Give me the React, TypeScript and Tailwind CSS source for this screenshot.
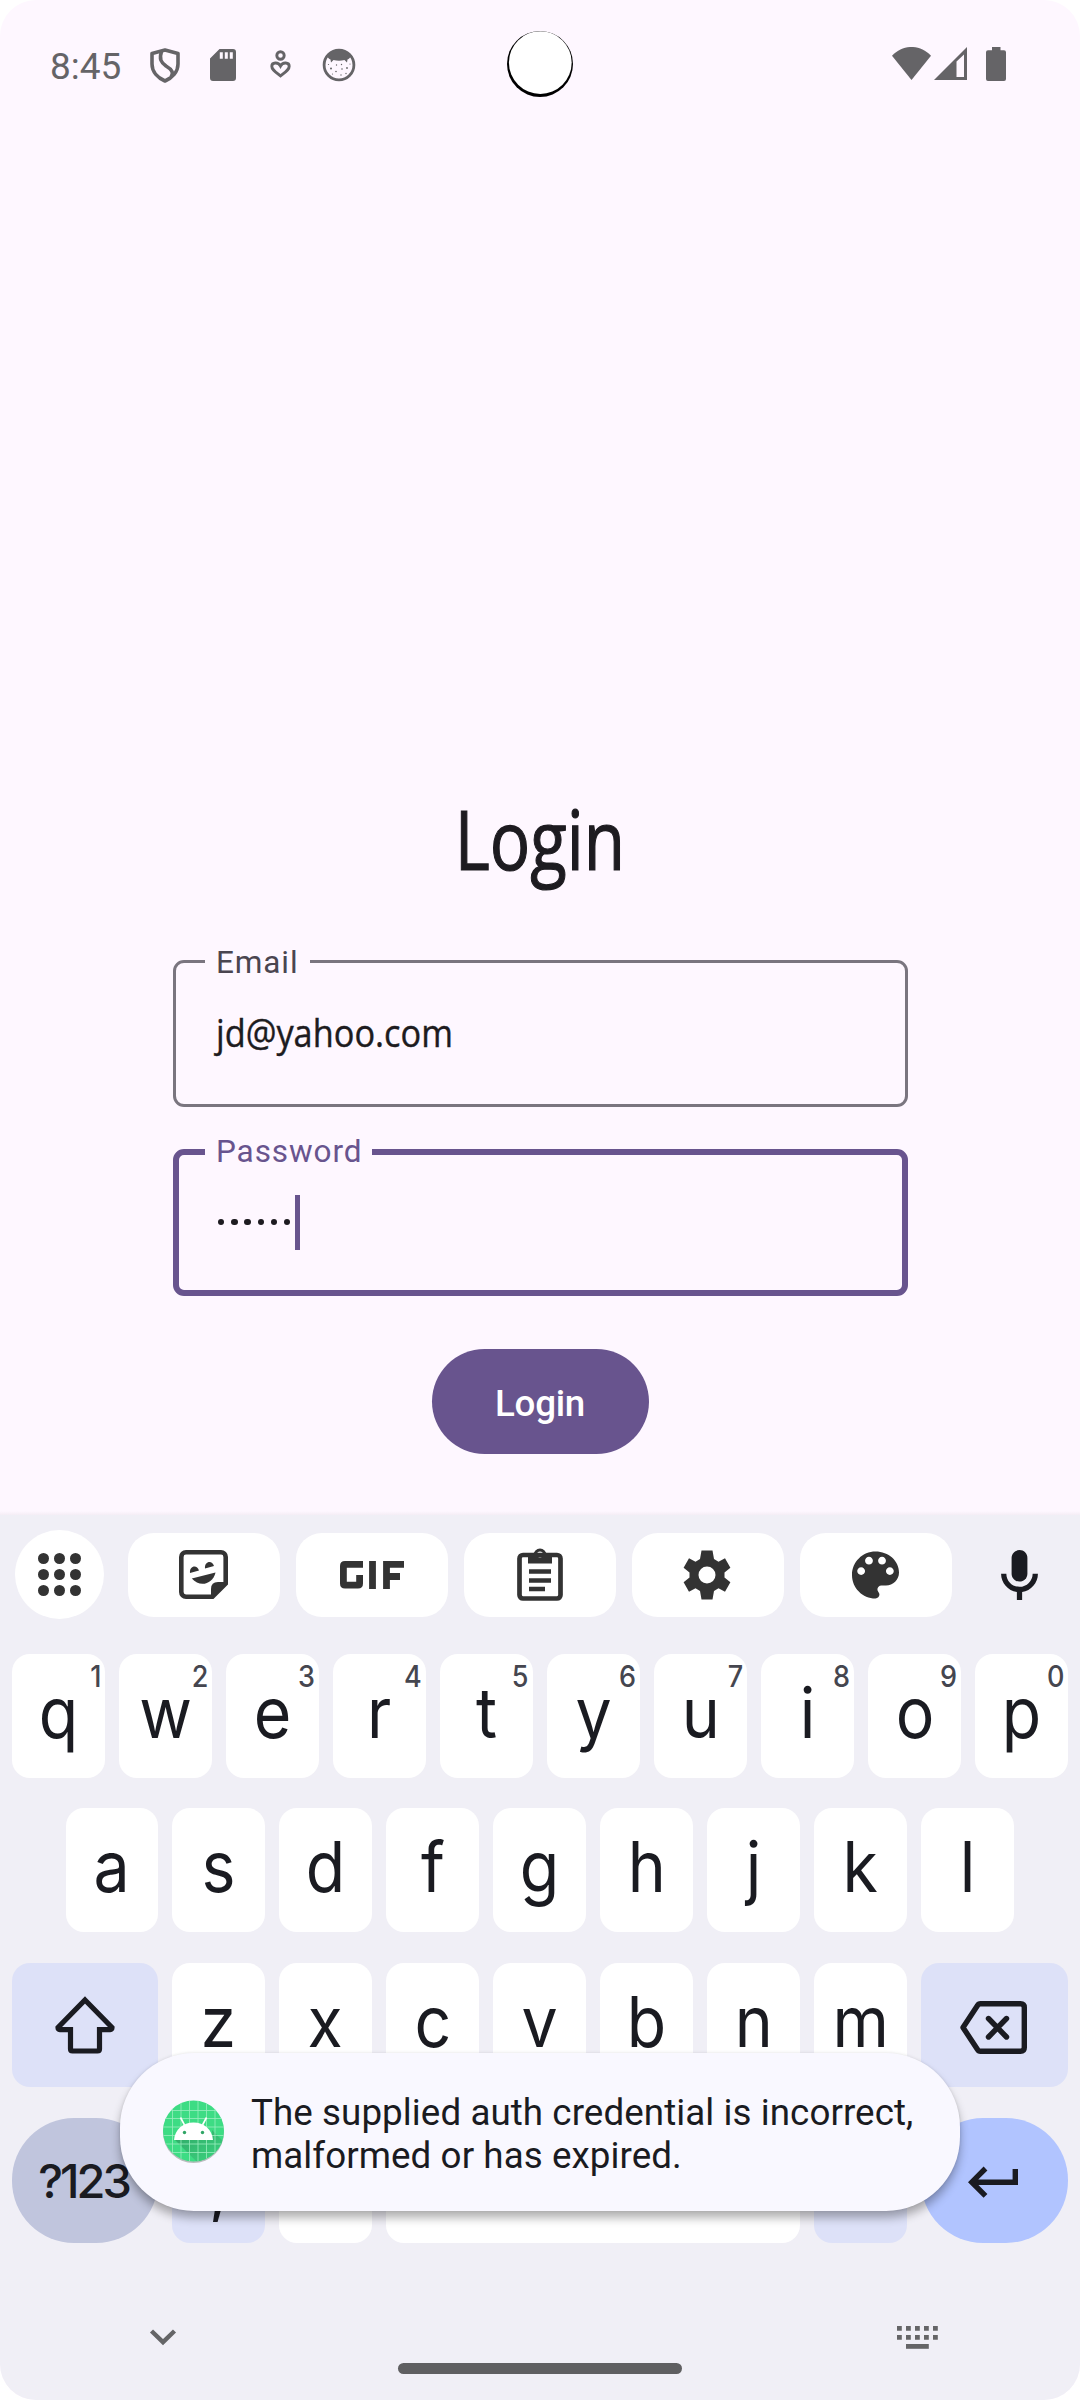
import type { ReactNode } from "react";

const GREY = "#656467";

function StatusBar() {
  return (
    <header className="relative flex h-[124px] shrink-0 items-start pt-[45px] text-[#656467]">
      <span className="ml-[50px] w-[99px] pt-px font-['Roboto'] text-[37px] leading-[42px]">8:45</span>
      <svg className="mt-[3px] mr-[29px]" width="32" height="35" viewBox="0 0 32 35" fill="none" stroke={GREY} strokeWidth="3.600" strokeLinejoin="round">
        <path d="M16 2 L29 5.500 V16 C29 24 23 30 16 33 C9 30 3 24 3 16 V5.500 Z" />
        <path d="M12.500 3.500 C10 11 12 14.500 17 18 C23 21.500 25 25 22 29" />
      </svg>
      <svg className="mt-1 mr-[34px]" width="26" height="32" viewBox="0 0 26 32">
        <path fill={GREY} fillRule="evenodd" d="M9.500 0H23a3 3 0 0 1 3 3v26a3 3 0 0 1-3 3H3a3 3 0 0 1-3-3V9.500Z M9.800 3.200v6.600h3V3.200Z M14.800 3.200v6.600h3V3.200Z M19.800 3.200v6.600h3V3.200Z" />
      </svg>
      <svg className="mt-[5px] mr-[31px]" width="21" height="29" viewBox="0 0 21 29" fill="none" stroke={GREY} strokeWidth="2.900">
        <circle cx="10.500" cy="5.500" r="3.700" />
        <path d="M10.500 26 C5 21.500 1.800 19.500 1.800 16.200 C1.800 12.500 8 11.500 10.500 16 C13 11.500 19.200 12.500 19.200 16.200 C19.200 19.500 16 21.500 10.500 26 Z" />
      </svg>
      <svg className="mt-[3px]" width="34" height="34" viewBox="0 0 34 34">
        <circle cx="17" cy="17" r="14.900" fill="none" stroke={GREY} strokeWidth="2.800" />
        <path d="M5 8 C11 0 23 0 29 8 C28 10 27 11 25.500 11.500 L25 14.500 L22.500 12 C19 13 15 13 11.500 12 L9 14.500 L8.500 11.500 C7 11 6 10 5 8 Z" fill={GREY} />
        <g fill={GREY}>
          <circle cx="9" cy="20.500" r="1" />
          <circle cx="14.500" cy="17" r="0.700" />
          <circle cx="19.500" cy="16.500" r="0.700" />
          <circle cx="25" cy="20" r="0.900" />
          <circle cx="20" cy="21" r="0.800" />
          <circle cx="14" cy="23.500" r="0.800" />
          <circle cx="19" cy="27" r="0.700" />
          <circle cx="10.500" cy="26" r="0.600" />
          <circle cx="24" cy="25.500" r="0.700" />
          <circle cx="28" cy="16" r="0.600" />
          <circle cx="6.500" cy="16.500" r="0.600" />
        </g>
      </svg>
      <svg className="absolute left-[506px] top-[30px]" width="68" height="68" viewBox="0 0 68 68">
        <circle cx="34" cy="34" r="33" fill="#000" />
        <circle cx="34.300" cy="32.600" r="31.400" fill="#fff" />
      </svg>
      <div className="mt-0.5 ml-auto mr-[74px] flex">
        <svg width="39" height="33" viewBox="0 0 39 33" fill={GREY}><path d="M0 8.800 C11-3 28-3 39 8.800 L19.500 33Z" /></svg>
        <svg className="ml-[3px]" width="33" height="33" viewBox="0 0 33 33">
          <path fill={GREY} fillRule="evenodd" d="M33 0V33H0Z M22.500 14.500V30H30V7.500Z" />
        </svg>
        <svg className="ml-[19px]" width="20" height="34" viewBox="0 0 20 34" fill={GREY}>
          <path d="M6 0h8.500v3.300H18a2 2 0 0 1 2 2V32a2 2 0 0 1-2 2H2a2 2 0 0 1-2-2V5.300a2 2 0 0 1 2-2h4Z" />
        </svg>
      </div>
    </header>
  );
}

function Form() {
  return (
    <main className="flex flex-1 flex-col items-center pt-[664px] text-[#1d1b20]">
      <h1 className="h-[100px] scale-x-[0.82] font-['Open_Sans'] text-[82px] leading-[100px] [-webkit-text-stroke:1.2px_#1d1b20]">Login</h1>
      <div className="relative mt-[72px] ml-px h-[147px] w-[735px] shrink-0 rounded-[11px] border-[3px] border-[#7a757f]">
        <span className="absolute -top-[21px] left-[29px] h-[42px] w-[105px] bg-[#fef7ff] pl-[11px] font-['Roboto'] text-[31.5px] leading-[42px] tracking-[0.9px] text-[#4a4550]">Email</span>
        <p className="mt-[41px] ml-[40px] w-max origin-left scale-x-[0.88] font-['Open_Sans'] text-[39px] leading-[56px] [-webkit-text-stroke:0.4px_#1d1b20]">jd@yahoo.com</p>
      </div>
      <div className="relative mt-[42px] ml-px h-[147px] w-[735px] shrink-0 rounded-[11px] border-[6px] border-[#68548e]">
        <span className="absolute -top-[24px] left-[26px] h-[42px] w-[167px] bg-[#fef7ff] pl-[11px] font-['Roboto'] text-[31.5px] leading-[42px] tracking-[0.9px] text-[#68548e]">Password</span>
        <div className="mt-[40px] ml-[39px] flex h-[55px] items-center">
          <div className="-mt-px flex gap-[6.800px]">
            {[0, 1, 2, 3, 4, 5].map((n) => (
              <span key={n} className="size-[6.400px] rounded-full bg-[#1d1b20]" />
            ))}
          </div>
          <span className="ml-[4.500px] h-[55px] w-[5px] bg-[#68548e]" />
        </div>
      </div>
      <button className="mt-[53px] h-[105px] w-[217px] shrink-0 rounded-full bg-[#68548e] pt-[4px] font-['Roboto'] text-[36.750px] font-medium leading-[44px] tracking-[-0.3px] text-white">Login</button>
    </main>
  );
}

function Pill({ children }: { children: ReactNode }) {
  return <div className="flex h-[84px] w-[152px] items-center justify-center rounded-[26px] bg-white">{children}</div>;
}

function Toolbar() {
  const ink = "#333333";
  return (
    <div className="flex h-[89px] items-center pl-[15px] pr-[42px]">
      <div className="mr-[24px] flex size-[89px] items-center justify-center rounded-full bg-white">
        <div className="grid grid-cols-3 gap-[5.200px]">
          {[0, 1, 2, 3, 4, 5, 6, 7, 8].map((n) => (
            <span key={n} className="size-[10.700px] rounded-full bg-[#333333]" />
          ))}
        </div>
      </div>
      <div className="flex gap-4">
        <Pill>
          <svg className="mr-[2px]" width="49" height="49" viewBox="0 0 49 49" fill={ink}>
            <path d="M7 2.300H42a4.700 4.700 0 0 1 4.700 4.700V33.500L33.500 46.700H7A4.700 4.700 0 0 1 2.300 42V7A4.700 4.700 0 0 1 7 2.300Z" fill="none" stroke={ink} strokeWidth="4.600" />
            <path d="M32 48V39q0-7 7-7H48L33 48Z" />
            <path d="M11 23c-.8-7 7-9 9-2.500Z M26 18.500c-.8-7 7-9 9-2.500Z" />
            <path d="M12.800 28.600 36.500 22.500C34 34 21 38 12.800 28.600Z" />
          </svg>
        </Pill>
        <Pill>
          <svg className="mr-px" width="64" height="28" viewBox="0 0 64 28" fill="none" stroke={ink} strokeWidth="6.800" strokeLinejoin="round">
            <path d="M23 3.400H5Q3.400 3.400 3.400 5V22.500Q3.400 24.100 5 24.100H18Q19.600 24.100 19.600 22.500V14" />
            <path d="M32.500 0V28M46.500 28V3.400H64M46.500 15.500H60" strokeLinejoin="miter" />
          </svg>
        </Pill>
        <Pill>
          <svg className="-mt-px mr-px" width="46" height="54" viewBox="0 0 46 54" fill="none" stroke={ink} strokeWidth="4.700">
            <rect x="2.500" y="8" width="41" height="43.500" rx="3.500" />
            <path d="M12 24.500H34M12 33.500H34M12 42H28" />
            <path d="M11 8V16.500H35V8H29.500A6.500 6.500 0 0 0 16.500 8Z M23 4.500a3 3 0 1 1 0 6a3 3 0 1 1 0-6Z" fill={ink} fillRule="evenodd" stroke="none" />
          </svg>
        </Pill>
        <Pill>
          <svg className="mr-[2px]" width="48" height="50" viewBox="-24 -25 48 50" fill={ink}>
            <path fillRule="evenodd" d="M-5.500-24.500H5.500L7-16 11.500-13.300 18-16.700 23.400-7.300 17.500-2.500V2.500L23.400 7.300 18 16.700 11.500 13.300 7 16 5.500 24.500H-5.500L-7 16-11.500 13.300-18 16.700-23.400 7.300-17.500 2.500V-2.500L-23.400-7.300-18-16.700-11.500-13.300-7-16Z M0-8.500A8.500 8.500 0 1 0 0 8.500A8.500 8.500 0 1 0 0-8.500Z" />
          </svg>
        </Pill>
        <Pill>
          <svg className="mr-px" width="47" height="48" viewBox="3 3 18 18" fill={ink}>
            <path d="M12 3c-4.970 0-9 4.030-9 9s4.030 9 9 9c.83 0 1.500-.67 1.500-1.500 0-.39-.15-.74-.39-1.010-.23-.26-.38-.61-.38-.99 0-.83.67-1.500 1.500-1.500H16c2.760 0 5-2.240 5-5 0-4.420-4.030-8-9-8zm-5.500 9c-.83 0-1.500-.67-1.500-1.500S5.670 9 6.500 9 8 9.670 8 10.500 7.330 12 6.500 12zm3-4C8.670 8 8 7.330 8 6.500S8.670 5 9.500 5s1.500.67 1.500 1.500S10.330 8 9.500 8zm5 0c-.83 0-1.500-.67-1.500-1.500S13.670 5 14.500 5s1.500.67 1.500 1.500S15.330 8 14.500 8zm3 4c-.83 0-1.500-.67-1.500-1.500S16.670 9 17.500 9s1.500.67 1.500 1.500-.67 1.500-1.500 1.500z" />
          </svg>
        </Pill>
      </div>
      <svg className="ml-auto" width="37" height="50" viewBox="5 2 14 19" fill="#1a1b21">
        <path d="M12 14c1.660 0 3-1.340 3-3V5c0-1.660-1.340-3-3-3S9 3.340 9 5v6c0 1.660 1.340 3 3 3z" />
        <path d="M17 11c0 2.760-2.240 5-5 5s-5-2.240-5-5H5c0 3.530 2.610 6.430 6 6.920V21h2v-3.080c3.390-.49 6-3.390 6-6.920h-2z" />
      </svg>
    </div>
  );
}

function Key({ label, hint, first }: { label: string; hint?: string; first?: boolean }) {
  return (
    <div className={`relative flex h-[123.500px] justify-center rounded-[18px] bg-white pt-[19px] font-['Inter'] text-[70px] leading-[80px] ${first ? "w-[92px]" : "w-[93px]"}`}>
      <span className="scale-x-[0.92]">{label}</span>
      {hint && <span className="absolute right-[4px] top-[4px] origin-right scale-x-[0.9] font-['Inter'] text-[30px] font-medium leading-[36px] text-[#45464f]">{hint}</span>}
    </div>
  );
}

function Keyboard() {
  return (
    <section className="relative h-[885px] shrink-0 bg-[#f0eff6] pt-[15px] text-[#1a1b21]">
      <div className="absolute inset-x-0 -top-[4px] h-[4px] bg-linear-to-b from-[#fef7ff] to-[#f4edf5]" />
      <Toolbar />
      <div className="mt-[35px] flex gap-[14px] px-3">
        {"qwertyuiop".split("").map((c, i) => (
          <Key key={c} label={c} hint={String((i + 1) % 10)} />
        ))}
      </div>
      <div className="mt-[30.500px] flex gap-[14px] pl-[66px]">
        {"asdfghjkl".split("").map((c) => (
          <Key key={c} label={c} first={c === "a"} />
        ))}
      </div>
      <div className="mt-[31.500px] flex gap-[14px] pl-3">
        <div className="flex w-[146px] items-center justify-center rounded-[18px] bg-[#dde1f8]">
          <svg width="60" height="58" viewBox="0 0 60 58" fill="none" stroke="#1a1b21" strokeWidth="5.200">
            <path d="M30 4 L57 31.500 Q57 33.500 55 33.700 H44.500 V53 Q44.500 55 42.500 55 H17.500 Q15.500 55 15.500 53 V33.700 H5 Q3 33.500 3 31.500Z" />
          </svg>
        </div>
        {"zxcvbnm".split("").map((c) => (
          <Key key={c} label={c} />
        ))}
        <div className="flex w-[147px] items-center justify-center rounded-[18px] bg-[#dde1f8]">
          <svg className="mt-[6px] mr-[2px]" width="67" height="53" viewBox="0 0 67 53" fill="none" stroke="#1a1b21" strokeWidth="5.400" strokeLinejoin="round">
            <path d="M20.500 2.700H60.500Q64.300 2.700 64.300 6.500V46.500Q64.300 50.300 60.500 50.300H20.500Q18.500 50.300 17.500 48.500L3 26.500 17.500 4.500Q18.500 2.700 20.500 2.700Z" />
            <path d="M28.500 17.500 46.500 36M46.500 17.500 28.500 36" strokeLinecap="round" />
          </svg>
        </div>
      </div>
      <div className="mt-[31px] flex h-[125px] gap-[14px] pl-3">
        <div className="flex w-[146px] items-center justify-center rounded-[62px] bg-[#c0c5dd] pt-[3px] pr-[3px] font-['Inter'] text-[47px] font-medium tracking-[-3px]">?123</div>
        <div className="flex w-[93px] justify-center rounded-[18px] bg-[#dde1f8] pt-[27px] font-['Inter'] text-[68px] leading-[80px]">,</div>
        <div className="w-[93px] rounded-[18px] bg-white" />
        <div className="w-[414px] rounded-[18px] bg-white" />
        <div className="flex w-[93px] justify-center rounded-[18px] bg-[#dde1f8] pt-[28px] font-['Inter'] text-[68px] leading-[80px]">.</div>
        <div className="flex w-[147px] items-center justify-center rounded-[62px] bg-[#b1c4ff]">
          <svg className="mt-[4px] mr-[3px]" width="50" height="32" viewBox="0 0 50 32" fill="none" stroke="#1a1b21" strokeWidth="5.400">
            <path d="M47.300 3V16.200H4M17.500 2.500 3.800 16.200 17.500 29.900" />
          </svg>
        </div>
      </div>
      <svg className="absolute left-[149px] top-[813px]" width="28" height="18" viewBox="0 0 28 18" fill="none" stroke="#656567" strokeWidth="4.400"><path d="M2.500 3 14 14.200 25.500 3" /></svg>
      <svg className="absolute left-[897px] top-[811px]" width="41" height="23" viewBox="0 0 41 23" fill="#656567">
        {[0, 9, 18, 27, 36].map((x) => (
          <path key={x} d={`M${x} 0h4.800v4.800h-4.800Z M${x} 9h4.800v4.800h-4.800Z`} />
        ))}
        <path d="M9 18h22.800v4.800H9Z" />
      </svg>
      <div className="absolute left-[398px] top-[848px] h-[11px] w-[284px] rounded-full bg-[#5f5f61]" />
      <Toast />
    </section>
  );
}

function Toast() {
  return (
    <div className="absolute left-[120px] top-[538px] flex h-[158px] w-[840px] items-center rounded-[74px] bg-[#f9f8ff] pl-[42px] shadow-[0_7px_10px_rgba(0,0,0,0.3),0_0_3px_rgba(0,0,0,0.1)]">
      <svg width="63" height="64" viewBox="0 0 63 64">
        <defs>
          <clipPath id="disc"><circle cx="31.500" cy="31" r="30.500" /></clipPath>
          <linearGradient id="fall" x1="0" y1="0" x2="1" y2="1">
            <stop offset="0" stopColor="#2fa565" />
            <stop offset="1" stopColor="#3ddc84" />
          </linearGradient>
        </defs>
        <circle cx="31.500" cy="32.500" r="30.500" fill="#b8bdbd" />
        <g clipPath="url(#disc)">
          <path fill="#3ddc84" d="M0 0h63v64H0z" />
          <path d="M12 39 50 39V30L70 50V64H37Z" fill="url(#fall)" />
          <path stroke="#9aeebf" strokeWidth="0.800" d="M10.500 0V62M19 0V62M27.500 0V62M36 0V62M44.500 0V62M53 0V62M0 10.500H63M0 18.500H63M0 27H63M0 35.500H63M0 44H63M0 52.500H63" />
        </g>
        <path fill="#fff" d="M12 40C13 29 21 22.500 31.500 22.500S50 29 51 40Z" />
        <path stroke="#fff" strokeWidth="1.600" d="M22.500 25 18.500 17.500M40.500 25 44.500 17.500" />
        <circle cx="22.500" cy="32.500" r="1.700" fill="#2fa565" />
        <circle cx="40.500" cy="32.500" r="1.700" fill="#2fa565" />
      </svg>
      <p className="ml-[26px] mt-[3px] whitespace-nowrap font-['Roboto'] text-[36.750px] leading-[43px] tracking-[0.070px] text-[#1a1b21]">
        The supplied auth credential is incorrect,
        <br />
        malformed or has expired.
      </p>
    </div>
  );
}

export default function App() {
  return (
    <div className="h-[2400px] w-[1080px] bg-white">
      <div className="flex h-[2400px] w-[1080px] flex-col overflow-hidden rounded-[36px] bg-[#fef7ff]">
        <StatusBar />
        <Form />
        <Keyboard />
      </div>
    </div>
  );
}
